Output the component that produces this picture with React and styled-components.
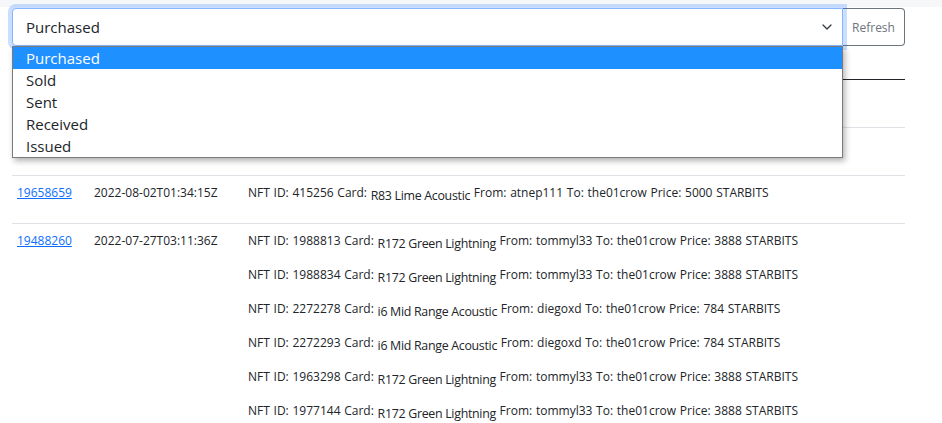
import React from "react";
import styled, { createGlobalStyle } from "styled-components";

const GlobalStyle = createGlobalStyle`
  html, body { margin: 0; padding: 0; background: #fff; }
  body {
    font-family: "Open Sans", "Noto Sans", sans-serif;
    color: #212529;
    -webkit-font-smoothing: antialiased;
  }
`;

const TopBar = styled.div`
  height: 7px;
  background: #f6f7f9;
`;

const Main = styled.main`
  width: 893px;
  margin: 1px 0 0 12px;
`;

const InputGroup = styled.div`
  position: relative;
  display: flex;
  height: 38px;
`;

const SelectBox = styled.div`
  position: relative;
  z-index: 2;
  flex: 1;
  display: flex;
  align-items: center;
  justify-content: space-between;
  box-sizing: border-box;
  padding: 0 10px 0 13px;
  border: 1px solid #86b7fe;
  border-radius: 4px 0 0 4px;
  box-shadow: 0 0 0 4px rgba(13, 110, 253, 0.22);
  background: #fff;
  font-size: 15px;
  color: #212529;
`;

const Chevron = styled.svg`
  width: 10px;
  height: 6px;
`;

const RefreshButton = styled.button`
  width: 62px;
  box-sizing: border-box;
  border: 1px solid #6c757d;
  border-left: none;
  border-radius: 0 4px 4px 0;
  background: #fff;
  color: #6c757d;
  font-family: "Open Sans", "Noto Sans", sans-serif;
  font-size: 12px;
  padding: 1px 0 0 0;
  cursor: pointer;
`;

const OptionList = styled.ul`
  position: absolute;
  z-index: 10;
  top: 38px;
  left: 0;
  width: 831px;
  margin: 0;
  padding: 0;
  list-style: none;
  box-sizing: border-box;
  border: 1px solid #7a7a7a;
  background: #fff;
  box-shadow: 2px 3px 6px rgba(0, 0, 0, 0.3);
`;

const Option = styled.li`
  height: 22px;
  line-height: 22px;
  padding-left: 13px;
  font-size: 15px;
  color: ${(p) => (p.$active ? "#fff" : "#212529")};
  background: ${(p) => (p.$active ? "#1e90ff" : "#fff")};
`;

const Table = styled.table`
  width: 100%;
  table-layout: fixed;
  border-collapse: collapse;
  font-size: 12px;
`;

const Th = styled.th`
  width: ${(p) => p.$w || "auto"};
  text-align: left;
  padding: 9px 5px 8px;
  line-height: 16px;
  font-weight: 700;
  border-bottom: 1px solid #212529;
`;

const Tr = styled.tr`
  border-bottom: 1px solid #dee2e6;
`;

const Td = styled.td`
  vertical-align: top;
  padding: 8px 5px;
  line-height: 17px;
`;

const TxLink = styled.a`
  color: #0d6efd;
  text-decoration: underline;
`;

const Entry = styled.div`
  min-height: 31px;
  word-spacing: 0.6px;
  & + & {
    margin-top: 3px;
  }
`;

const CardName = styled.span`
  font-size: 12.4px;
  letter-spacing: -0.3px;
  word-spacing: 0;
  vertical-align: -3px;
`;

const options = ["Purchased", "Sold", "Sent", "Received", "Issued"];

const rows = [
  {
    id: "19745512",
    time: "2022-08-05T14:22:08Z",
    items: [{ nft: "1503321", card: "B12 Blue Bass", from: "kerlo77", price: "1200" }],
  },
  {
    id: "19701834",
    time: "2022-08-04T09:47:51Z",
    items: [{ nft: "902117", card: "R83 Lime Acoustic", from: "atnep111", price: "4800" }],
  },
  {
    id: "19658659",
    time: "2022-08-02T01:34:15Z",
    items: [{ nft: "415256", card: "R83 Lime Acoustic", from: "atnep111", price: "5000" }],
  },
  {
    id: "19488260",
    time: "2022-07-27T03:11:36Z",
    items: [
      { nft: "1988813", card: "R172 Green Lightning", from: "tommyl33", price: "3888" },
      { nft: "1988834", card: "R172 Green Lightning", from: "tommyl33", price: "3888" },
      { nft: "2272278", card: "i6 Mid Range Acoustic", from: "diegoxd", price: "784" },
      { nft: "2272293", card: "i6 Mid Range Acoustic", from: "diegoxd", price: "784" },
      { nft: "1963298", card: "R172 Green Lightning", from: "tommyl33", price: "3888" },
      { nft: "1977144", card: "R172 Green Lightning", from: "tommyl33", price: "3888" },
    ],
  },
];

export default function App() {
  return (
    <>
      <GlobalStyle />
      <TopBar />
      <Main>
        <InputGroup>
          <SelectBox>
            <span>Purchased</span>
            <Chevron viewBox="0 0 10 6">
              <path d="M1 1l4 4 4-4" fill="none" stroke="#343a40" strokeWidth="1.3" strokeLinecap="round" strokeLinejoin="round" />
            </Chevron>
          </SelectBox>
          <RefreshButton>Refresh</RefreshButton>
          <OptionList>
            {options.map((o, i) => (
              <Option key={o} $active={i === 0}>
                {o}
              </Option>
            ))}
          </OptionList>
        </InputGroup>
        <Table>
          <thead>
            <tr>
              <Th $w="67px">Block</Th>
              <Th $w="144px">Time</Th>
              <Th>Transactions</Th>
            </tr>
          </thead>
          <tbody>
            {rows.map((r) => (
              <Tr key={r.id}>
                <Td>
                  <TxLink href="#">{r.id}</TxLink>
                </Td>
                <Td>{r.time}</Td>
                <Td>
                  {r.items.map((it) => (
                    <Entry key={it.nft}>
                      NFT ID: {it.nft} Card: <CardName>{it.card}</CardName> From: {it.from} To: the01crow Price: {it.price} STARBITS
                    </Entry>
                  ))}
                </Td>
              </Tr>
            ))}
          </tbody>
        </Table>
      </Main>
    </>
  );
}
